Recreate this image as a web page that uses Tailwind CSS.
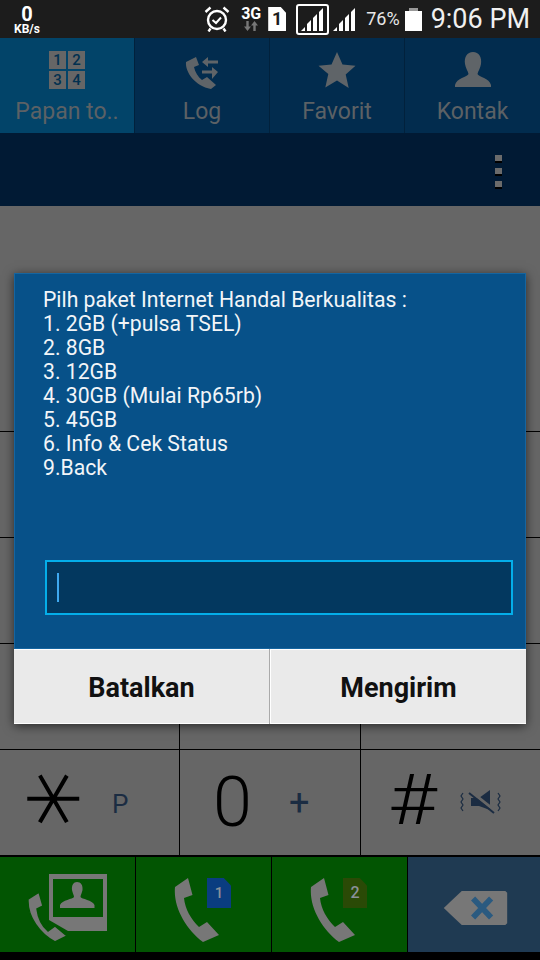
<!doctype html>
<html lang="en">
  <head>
    <meta charset="UTF-8" />
    <meta name="viewport" content="width=device-width, initial-scale=1.0" />
    <script src="https://cdn.jsdelivr.net/npm/@tailwindcss/browser@4"></script>
    <title>Dialer</title>
  </head>
  <body class="relative h-[960px] w-[540px] overflow-hidden bg-black font-['Roboto',sans-serif]">
    <!-- status bar -->
    <div class="flex h-[38px] items-center bg-[#1c1c1c] text-white">
      <div class="flex w-[54px] flex-col items-center font-bold">
        <span class="text-[20px] leading-[20px]">0</span>
        <span class="text-[12px] leading-[11px]">KB/s</span>
      </div>
      <div class="ml-auto flex items-center">
        <svg width="26" height="26" viewBox="0 0 26 26" fill="none" stroke="#fff" stroke-width="2.4">
          <circle cx="13" cy="14" r="9" />
          <path d="M8.500 14l3.500 3 5-5.500" stroke-width="2" />
          <path d="M1.500 6l5-4.500M24.500 6l-5-4.500M6.500 22.500l-2 3M19.500 22.500l2 3" stroke-width="2.400" />
        </svg>
        <div class="ml-[10px] flex w-[22px] flex-col items-center">
          <span class="text-[16px] font-bold leading-[13px]">3G</span>
          <svg width="14" height="12" viewBox="0 0 14 12"><path d="M3.500 11L0 6.500h2.300V1h2.400v5.500H7zM10.500 1L14 5.500h-2.300V11H9.300V5.500H7z" fill="#777" /></svg>
        </div>
        <div class="ml-[6px] flex h-[24px] w-[18px] items-center justify-center bg-white text-[18px] font-bold leading-none text-[#1c1c1c] [clip-path:polygon(0_0,70%_0,100%_25%,100%_100%,0_100%)]">1</div>
        <div class="ml-[10px] flex h-[31px] w-[33px] items-end justify-center rounded-[3px] border-2 border-white pb-[1px]">
          <svg width="25" height="24" viewBox="0 0 25 24" fill="#fff"><path d="M1 23l4-4v4zM7 23v-7l4-4v11zM13 23V10l4-4v17zM19 23V4l4-4v23z" /></svg>
        </div>
        <svg class="ml-[3px]" width="25" height="25" viewBox="0 0 25 25" fill="#fff"><path d="M1 24l4-4v4zM7 24v-7l4-4v11zM13 24V11l4-4v17zM19 24V5l4-4v23z" /></svg>
        <span class="ml-[9px] text-[18px] leading-none text-[#e8e8e8]">76%</span>
        <div class="ml-[5px] flex flex-col items-center">
          <div class="h-[3px] w-[9px] bg-[#999]"></div>
          <div class="h-[20px] w-[17px] bg-white"></div>
        </div>
        <span class="ml-[9px] mr-[10px] text-[27px] leading-none text-[#f0f0f0]">9:06 PM</span>
      </div>
    </div>

    <!-- tabs -->
    <div class="grid h-[95px] grid-cols-4 bg-[#022c4e] text-[23px] text-[#5c6165]">
      <div class="flex flex-col items-center border-r border-[#01213c] bg-[#024469] pt-[13px]">
        <div class="grid h-[38px] grid-cols-2 gap-[2px] text-[15px] font-medium leading-[18px] text-[#02304f]">
          <span class="h-[18px] w-[17px] bg-[#666] text-center">1</span>
          <span class="h-[18px] w-[17px] bg-[#666] text-center">2</span>
          <span class="h-[18px] w-[17px] bg-[#666] text-center">3</span>
          <span class="h-[18px] w-[17px] bg-[#666] text-center">4</span>
        </div>
        <span class="mt-[7px] leading-[32px]">Papan to..</span>
      </div>
      <div class="flex flex-col items-center border-r border-[#01213c] pt-[13px]">
        <svg width="38" height="38" viewBox="0 0 38 38" fill="#5f6468">
          <path d="M13 6L3 11c-1 10 9 24 25 27l5-4-9-8-5 3c-4-3-7-8-8-13l5-2z" />
          <path d="M19 11l6-5v3.500h10v3H25V16zM35 21l-6-5v3.500H19v3h10V28z" />
        </svg>
        <span class="mt-[7px] leading-[32px]">Log</span>
      </div>
      <div class="flex flex-col items-center border-r border-[#01213c] pt-[13px]">
        <svg width="38" height="38" viewBox="0 0 38 38" fill="#5f6468"><path d="M19 1l5.500 12.500 13 1.200-9.800 8.800 3 13.500L19 29.500 7.300 36.500l3-13.500L.5 14.700l13-1.200z" /></svg>
        <span class="mt-[7px] leading-[32px]">Favorit</span>
      </div>
      <div class="flex flex-col items-center pt-[13px]">
        <svg width="38" height="38" viewBox="0 0 38 38" fill="#5f6468"><path d="M19 1c6 0 9 5 8 12-.5 4-3 7-3.500 10 1 3 12 4 13.500 11v2H1v-2c1.500-7 12.500-8 13.500-11-.5-3-3-6-3.500-10-1-7 2-12 8-12z" /></svg>
        <span class="mt-[7px] leading-[32px]">Kontak</span>
      </div>
    </div>

    <!-- number field -->
    <div class="flex h-[73px] items-center justify-end bg-[#011a34] pr-[38px] pt-[2px]">
      <div class="flex flex-col gap-[7px]">
        <span class="h-[6px] w-[7px] bg-[#6b6b6b] shadow-[0_2px_0_#000]"></span>
        <span class="h-[6px] w-[7px] bg-[#6b6b6b] shadow-[0_2px_0_#000]"></span>
        <span class="h-[6px] w-[7px] bg-[#6b6b6b] shadow-[0_2px_0_#000]"></span>
      </div>
    </div>

    <!-- keypad -->
    <div class="grid h-[649px] grid-rows-[120px_106px_106px_106px_106px_105px] bg-[#666]">
      <div></div>
      <div class="grid grid-cols-[180px_181px_1fr] border-b border-black"><i class="border-r border-black"></i><i class="border-r border-black"></i></div>
      <div class="grid grid-cols-[180px_181px_1fr] border-b border-black"><i class="border-r border-black"></i><i class="border-r border-black"></i></div>
      <div class="grid grid-cols-[180px_181px_1fr] border-b border-black"><i class="border-r border-black"></i><i class="border-r border-black"></i></div>
      <div class="grid grid-cols-[180px_181px_1fr] border-b border-black"><i class="border-r border-black"></i><i class="border-r border-black"></i></div>
      <div class="grid grid-cols-[180px_181px_1fr]">
        <div class="relative border-r border-black">
          <span class="absolute left-[6px] top-[-6px] inline-block rotate-90 font-['DejaVu_Sans',sans-serif] text-[110px] font-extralight leading-[110px] text-black [-webkit-text-stroke:1.5px_black]">*</span>
          <span class="absolute left-[112px] top-[39px] text-[26px] leading-[30px] text-[#1b2c42]">P</span>
        </div>
        <div class="relative border-r border-black">
          <span class="absolute left-[33px] top-[12px] text-[70px] font-light leading-[80px] text-black">0</span>
          <span class="absolute left-[109px] top-[33px] text-[36px] leading-[40px] text-[#1b2c42]">+</span>
        </div>
        <div class="relative">
          <span class="absolute left-[31px] top-[6px] inline-block scale-x-[1.2] text-[70px] font-light leading-[88px] text-black">#</span>
          <svg class="absolute left-[99px] top-[39px]" width="42" height="26" viewBox="0 0 42 26" fill="none" stroke="#1b2c42">
            <path d="M3 4l-2 3 2 3-2 3 2 3-2 3 2 3M38 4l2 3-2 3 2 3-2 3 2 3-2 3" stroke-width="1.200" />
            <path d="M11 9h8l11-8v20l-11-4h-8z" fill="#1b2c42" stroke="none" />
            <path d="M9 1l25 20" stroke="#666" stroke-width="3" />
            <path d="M9 4l25 20" stroke-width="2" />
          </svg>
        </div>
      </div>
    </div>

    <!-- call buttons -->
    <div class="absolute left-0 top-[855px] grid h-[105px] w-full grid-cols-[136px_136px_136px_132px] border-t-2 border-black bg-black pb-[8px]">
      <div class="relative border-r border-black bg-[#025502]">
        <svg class="absolute left-[28px] top-[15px]" width="82" height="72" viewBox="0 0 82 72" fill="#777">
          <path d="M21 2H79V59H40L21 48Z" />
          <rect x="25" y="7" width="50" height="38" fill="#025502" />
          <path d="M49 10c4 0 6 3 5.500 8-.5 3-2 5-2 7 1 2 12 3 14 8v3H32v-3c2-5 13-6 14-8 0-2-1.500-4-2-7-.5-5 1.500-8 5-8z" />
          <path d="M11 20L0 27C-1 45 12 62 27 70L39 64 27 54 20 59C14 54 10 45 9 37L15 34Z" stroke="#025502" stroke-width="1.500" />
        </svg>
      </div>
      <div class="relative border-r border-black bg-[#025502]">
        <svg class="absolute left-[38px] top-[20px]" width="46" height="66" viewBox="0 0 46 66" fill="#777"><path d="M14 1L1 10C-1 30 12 52 29 65L45 58 33 45 25 50C17 42 11 32 10 21L18.500 18Z" /></svg>
        <div class="absolute left-[71px] top-[21px] flex h-[30px] w-[24px] items-center justify-center bg-[#0a3d80] text-[15px] font-medium text-[#8a9099] [clip-path:polygon(0_0,70%_0,100%_25%,100%_100%,0_100%)]">1</div>
      </div>
      <div class="relative border-r border-black bg-[#025502]">
        <svg class="absolute left-[38px] top-[20px]" width="46" height="66" viewBox="0 0 46 66" fill="#777"><path d="M14 1L1 10C-1 30 12 52 29 65L45 58 33 45 25 50C17 42 11 32 10 21L18.500 18Z" /></svg>
        <div class="absolute left-[71px] top-[21px] flex h-[30px] w-[24px] items-center justify-center bg-[#2a4a06] text-[16px] font-medium text-[#8a9099] [clip-path:polygon(0_0,70%_0,100%_25%,100%_100%,0_100%)]">2</div>
      </div>
      <div class="flex items-center justify-center bg-[#1f3a52] pl-[2px] pt-[6px]">
        <svg width="66" height="36" viewBox="0 0 68 38">
          <path d="M20 1h46l2 2v32l-2 2H20L1 19z" fill="#777" />
          <path d="M32 9l19 20M51 9L32 29" stroke="#2a5a80" stroke-width="6" />
        </svg>
      </div>
    </div>

    <!-- USSD dialog -->
    <div class="absolute left-[14px] top-[273px] flex h-[451px] w-[512px] flex-col shadow-[0_2px_10px_rgba(0,0,0,0.6)]">
      <div class="relative h-[376px] bg-[#075189] pl-[29px] pt-[15px] text-[21.2px] leading-[24px] text-[#f2f5f8] shadow-[inset_0_0_0_1px_#1565a0]">
        <p>Pilh paket Internet Handal Berkualitas :</p>
        <p>1. 2GB (+pulsa TSEL)</p>
        <p>2. 8GB</p>
        <p>3. 12GB</p>
        <p>4. 30GB (Mulai Rp65rb)</p>
        <p>5. 45GB</p>
        <p>6. Info &amp; Cek Status</p>
        <p>9.Back</p>
        <div class="absolute left-[31px] top-[287px] flex h-[55px] w-[468px] items-center border-2 border-[#04aeea] bg-[#03385f] pl-[10px]">
          <span class="h-[29px] w-[2px] bg-[#3fa9f0]"></span>
        </div>
      </div>
      <div class="grid h-[75px] grid-cols-[256px_256px] bg-[#eaeaea] pt-[4px] text-[27px] font-bold text-[#111] shadow-[inset_0_1px_0_#fff,inset_0_-1px_0_#fff]">
        <div class="-mt-[4px] flex items-center justify-center border-r border-[#aaa] pt-[4px]">Batalkan</div>
        <div class="-mt-[4px] flex items-center justify-center border-l border-white pt-[4px]">Mengirim</div>
      </div>
    </div>
  </body>
</html>
